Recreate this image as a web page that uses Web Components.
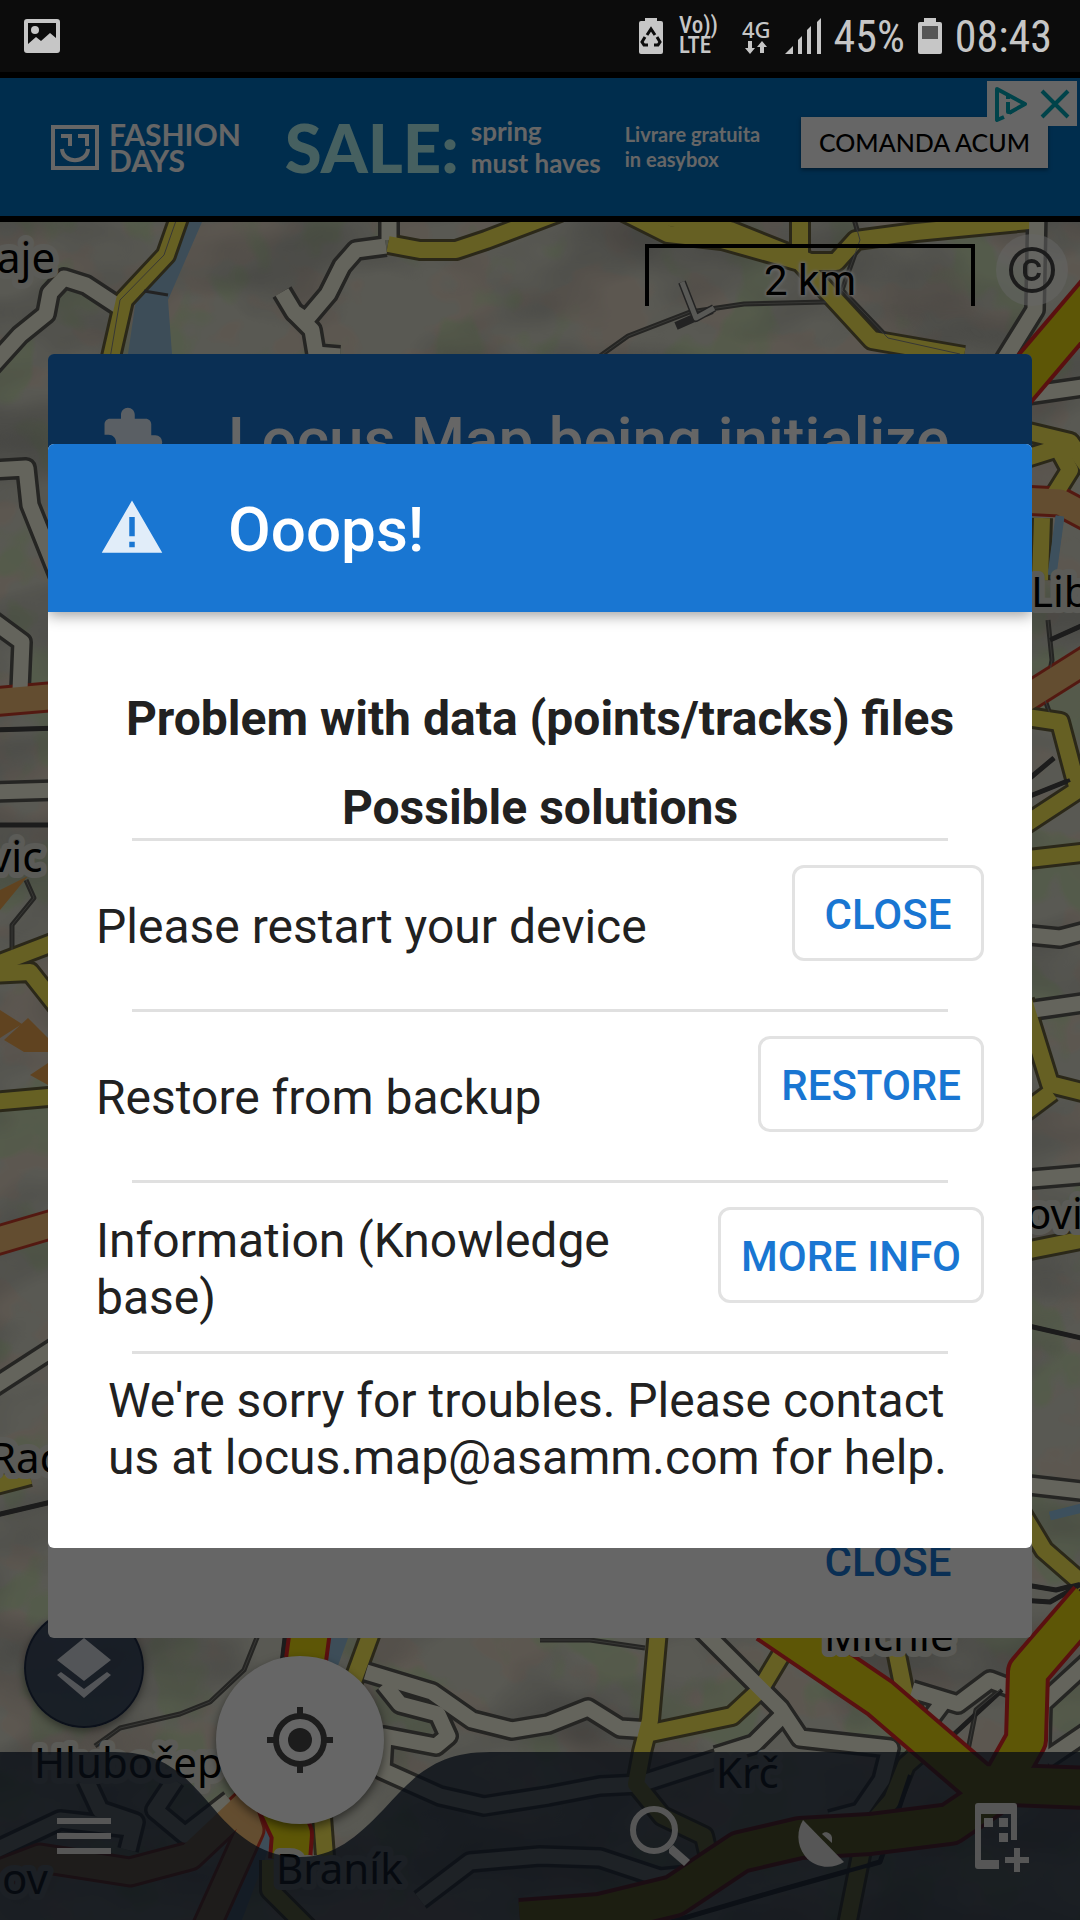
<!DOCTYPE html>
<html lang="en">
<head>
    <meta charset="UTF-8">
    <meta name="viewport" content="width=device-width, initial-scale=1">
    <title>Locus Map</title>
    <style>
        body {
            margin: 0;
            background: #000;
            font-family: Roboto, "Noto Sans", sans-serif;
        }
    </style>
</head>
<body>
<app-screen>
    <status-bar slot="status"></status-bar>
    <ad-banner slot="app"></ad-banner>
    <map-view slot="app"></map-view>
    <app-dialog slot="back" class="init">
        <svg slot="icon" viewBox="0 0 24 24"><path d="M20.5 11H19V7c0-1.1-.9-2-2-2h-4V3.5C13 2.12 11.88 1 10.5 1S8 2.12 8 3.5V5H4c-1.1 0-1.99.9-1.99 2v3.8H3.5c1.49 0 2.7 1.21 2.7 2.7s-1.21 2.7-2.7 2.7H2V20c0 1.1.9 2 2 2h3.8v-1.5c0-1.49 1.21-2.7 2.7-2.7s2.7 1.21 2.7 2.7V22H17c1.1 0 2-.9 2-2v-4h1.5a2.5 2.5 0 0 0 0-5z"/></svg>
        <span slot="title">Locus Map being initialize</span>
        <init-body></init-body>
    </app-dialog>
    <app-dialog slot="front">
        <svg slot="icon" viewBox="0 0 24 24"><path d="M1 21h22L12 2 1 21zm12-2h-2v-2h2v2zm0-4h-2V8h2v7z"/></svg>
        <span slot="title">Ooops!</span>
        <problem-body></problem-body>
    </app-dialog>
</app-screen>
</body>
<script>
    // small base: every element just puts its markup in an open shadow root
    class Base extends HTMLElement {
      constructor() {
        super()
        this.attachShadow({mode: 'open'})
        this.shadowRoot.innerHTML = this.render()
      }
    }

    class AppScreen extends Base {
      render() {
        return `
        <style>
          :host { display: grid; grid-template-rows: auto 1fr; min-height: 100vh; }
          .stage { display: grid; grid-template-columns: minmax(0, 1fr); }
          .stage > * { grid-area: 1 / 1; }
          .app { display: flex; flex-direction: column; isolation: isolate; }
          .layer { display: grid; align-items: center; padding: 0 48px; z-index: 1; }
          .scrim { background: rgba(0, 0, 0, .6); z-index: 2; }
          .front { z-index: 3; }
        </style>
        <slot name="status"></slot>
        <div class="stage">
          <div class="app"><slot name="app"></slot></div>
          <div class="layer"><slot name="back"></slot></div>
          <div class="scrim"></div>
          <div class="layer front"><slot name="front"></slot></div>
        </div>`
      }
    }
    customElements.define('app-screen', AppScreen)

    class StatusBar extends Base {
      render() {
        return `
        <style>
          :host { display: flex; align-items: center; height: 72px; padding: 0 28px 0 24px; background: #0c0c0c; color: #c6c6c6; fill: #c6c6c6; box-sizing: border-box; font: 44px "Roboto Condensed", Roboto, sans-serif; }
          svg { display: block; flex: none; }
          .right { display: flex; align-items: center; margin-left: auto; }
          .net { display: grid; line-height: 20px; font-weight: 500; }
          .volte { margin: 0 24px 0 16px; font-size: 23px; }
          .g { justify-items: center; gap: 2px; margin-right: 14px; font-size: 22px; font-family: "Noto Sans", sans-serif; }
          .pct { margin: 2px 13px 0; }
          .time { margin: 2px 0 0 13px; }
        </style>
        <svg width="36" height="34" viewBox="0 0 36 34"><path fill-rule="evenodd" d="M3 0h30q3 0 3 3v28q0 3-3 3H3q-3 0-3-3V3q0-3 3-3zM4 4v21l8-7 5 4 9-8 6 5V4z"/><circle cx="11" cy="11" r="4"/></svg>
        <div class="right">
          <svg width="24" height="36" viewBox="0 0 24 36"><path d="M6 3V0h12v3h4q2 0 2 2v29q0 2-2 2H2q-2 0-2-2V5q0-2 2-2z"/><path fill="none" stroke="#0c0c0c" stroke-width="3" d="M8 17l4-6 4 6M18 19l3 5-2 3h-4M6 19l-3 5 2 3h4"/></svg>
          <div class="net volte"><span>Vo))</span><span>LTE</span></div>
          <div class="net g"><span>4G</span><svg width="24" height="13" viewBox="0 0 24 13"><path d="M4 0h4v7h3l-5 6-5-6h3zM16 12h4V6h3l-5-6-5 6h3z"/></svg></div>
          <svg width="36" height="36" viewBox="0 0 36 36"><path d="M0 36l8-8v8zM13 36V22l4-4v18zM22 36V12l4-4v28zM32 36V4l4-4v36z"/></svg>
          <span class="pct">45%</span>
          <svg width="24" height="36" viewBox="0 0 24 36"><path d="M6 4V0h12v4h4q2 0 2 2v28q0 2-2 2H2q-2 0-2-2V6q0-2 2-2z"/><path fill="#555" d="M4 8h16v13H4z"/></svg>
          <span class="time">08:43</span>
        </div>`
      }
    }
    customElements.define('status-bar', StatusBar)

    class AdBanner extends Base {
      render() {
        return `
        <style>
          :host { position: relative; display: flex; align-items: center; height: 138px; padding: 0 32px 0 51px; border: solid #000; border-width: 6px 0; background: #0070c0; color: #fff; font: 700 26px/26px Lato, sans-serif; }
          .logo { display: flex; align-items: center; gap: 10px; margin-right: 44px; font-size: 30px; }
          .sale { color: #b0f0f0; font: 900 67px/67px Lato, sans-serif; margin-right: 12px; }
          .must { line-height: 32px; margin-right: 24px; }
          .free { font-size: 20px; line-height: 25px; }
          .cta { align-self: flex-start; margin: 39px 0 0 auto; border: 0; height: 51px; padding: 0 18px; background: #fff; color: #000; font: 500 25px/27px Lato, sans-serif; box-shadow: 0 2px 4px rgba(0, 0, 0, .4); }
          .choices { position: absolute; top: 3px; right: 3px; display: flex; width: 90px; height: 45px; background: #fff; }
          .choices button { flex: 1; display: grid; place-items: center; border: 0; padding: 0; background: none; }
          .choices svg { width: 36px; height: 36px; fill: none; stroke: #00a8b8; stroke-width: 4; }
        </style>
        <div class="logo">
          <svg width="48" height="45" viewBox="0 0 48 45" fill="none" stroke="#fff" stroke-width="4"><path d="M2 2h44v41H2zM10 11h9v10M27 11h9v10M11 24c1 15 25 15 26 0"/></svg>
          <span>FASHION<br>DAYS</span>
        </div>
        <span class="sale">SALE:</span>
        <span class="must">spring<br>must haves</span>
        <span class="free">Livrare gratuita<br>in easybox</span>
        <button class="cta">COMANDA ACUM</button>
        <div class="choices">
          <button aria-label="AdChoices"><svg viewBox="0 0 36 36"><path stroke-linejoin="round" d="M12 31l-7 3V3l28 15-16 9M16 16v10h4M16 10v3"/></svg></button>
          <button aria-label="Close ad"><svg viewBox="0 0 36 36"><path d="M5 5l26 26M31 5L5 31"/></svg></button>
        </div>`
      }
    }
    customElements.define('ad-banner', AdBanner)

    // kind: [casing colour, casing width, fill colour, fill width]
    const KINDS = {
      white: ['#5c5c58', 22, '#fbfae6', 15],
      yellow: ['#6b6540', 22, '#fff058', 16],
      thin: ['#5c5c58', 5, '#8a8a84', 1],
      black: ['#484848', 5, '#484848', 4],
      orange: ['#d0402c', 31, '#f8c078', 25],
      main: ['#e02828', 44, '#e8d810', 36],
      water: ['#98c8e8', 9, '#98c8e8', 8],
    }
    const ROADS = [
      // top band
      ['white', '-8,366 20,335 46,314 50,293 64,278 86,285 118,306'],
      ['yellow', '180,215 166,255 124,300 108,370'],
      ['thin', '178,215 164,255 120,300 108,370'],
      ['white', '389,210 389,240'],
      ['white', '386,246 356,250 342,266 328,294 306,320 294,312 282,292'],
      ['white', '294,312 312,330 316,354 340,356'],
      ['yellow', '388,244 420,250 456,250 486,240 560,212'],
      ['yellow', '620,210 668,234 722,240 800,262 838,303 872,340 964,356'],
      ['yellow', '800,210 800,262 836,262 856,240 916,232 1040,220'],
      ['yellow', '660,216 730,230 810,262'],
      ['thin', '852,212 860,240 842,290 888,338 960,354'],
      ['thin', '600,356 628,336 690,312 744,304 826,302'],
      ['white', '1037,210 1035,310 1004,360'],
      ['main', '1100,290 1015,390'],
      // left strip
      ['white', '-8,470 26,468 30,505 60,580'],
      ['white', '-8,620 22,642 20,690'],
      ['orange', '-8,702 60,696'],
      ['white', '-8,792 60,790'],
      ['black', '-8,730 60,728'],
      ['black', '-8,825 60,825'],
      ['thin', '12,955 12,925 34,898 26,880'],
      ['yellow', '-8,966 60,940'],
      ['yellow', '-8,974 30,972 60,1010'],
      ['yellow', '-8,1102 60,1096'],
      ['orange', '-8,1242 60,1222'],
      ['white', '-8,1388 60,1344'],
      ['yellow', '-8,1486 30,1476'],
      ['black', '-8,1516 60,1500'],
      // right strip
      ['white', '1020,396 1090,386'],
      ['yellow', '1020,430 1070,442 1090,470'],
      ['yellow', '1020,460 1058,448 1070,470 1050,502'],
      ['orange', '1020,500 1060,502 1090,518'],
      ['yellow', '1042,518 1040,580'],
      ['water', '1060,516 1052,575'],
      ['thin', '1048,620 1052,660 1045,700 1070,770'],
      ['black', '1050,640 1090,622'],
      ['orange', '1020,702 1090,658'],
      ['yellow', '1020,716 1060,722 1078,790 1020,828'],
      ['black', '1030,778 1054,758'],
      ['black', '1030,796 1070,780'],
      ['yellow', '1020,860 1090,852'],
      ['white', '1020,934 1060,938 1090,930'],
      ['white', '1020,1012 1090,1002'],
      ['yellow', '1024,1000 1050,1084 1090,1094'],
      ['yellow', '1020,1116 1052,1092'],
      ['white', '1020,1180 1090,1174'],
      ['yellow', '1020,1252 1090,1238'],
      ['black', '1020,1324 1090,1340'],
      ['white', '1020,1484 1090,1492'],
      ['water', '1050,1516 1090,1506'],
      ['yellow', '1020,1510 1044,1550 1090,1590'],
      ['black', '1020,1584 1056,1590 1080,1584'],
      ['black', '1020,1600 1050,1602 1082,1584'],
      // bottom, west of the button
      ['thin', '260,1630 244,1670 210,1702 180,1714 120,1728 95,1746'],
      ['white', '86,1780 100,1810 135,1822 128,1850'],
      ['white', '175,1780 155,1810 185,1835 230,1800'],
      ['white', '-8,1852 60,1820 130,1828'],
      ['orange', '-8,1876 40,1858 130,1872 190,1856 260,1790'],
      ['orange', '240,1800 250,1830 205,1930'],
      ['yellow', '270,1860 270,1890 310,1930'],
      ['main', '276,1800 292,1834 290,1860'],
      ['main', '310,1630 306,1660'],
      ['black', '286,1630 280,1680'],
      ['yellow', '320,1790 326,1870'],
      ['yellow', '372,1630 350,1690'],
      ['white', '366,1672 432,1692 472,1720 512,1730 548,1724 588,1708 620,1728 650,1730'],
      ['white', '384,1684 400,1704 438,1714 448,1736 436,1746 384,1736 382,1770 440,1796 484,1806 548,1796 600,1786 640,1784 720,1758'],
      ['white', '420,1900 470,1862 540,1856 600,1858 660,1878 700,1874'],
      // bottom, east
      ['thin', '540,1640 590,1640 645,1648'],
      ['yellow', '658,1630 650,1720 642,1752 636,1784 662,1816 704,1836 712,1870'],
      ['yellow', '646,1734 732,1716 760,1690 790,1640'],
      ['white', '700,1628 780,1708 800,1738 890,1748 882,1780 860,1812 830,1820'],
      ['white', '780,1718 754,1744 716,1756'],
      ['yellow', '894,1640 904,1690 924,1730'],
      ['white', '912,1690 958,1704 990,1680 1016,1690'],
      ['white', '928,1722 946,1698'],
      ['black', '1002,1690 950,1738'],
      ['thin', '1000,1690 976,1710 968,1750'],
      ['white', '1040,1780 1042,1704 1090,1660'],
      ['white', '1046,1760 1090,1730'],
      ['yellow', '930,1744 906,1765 892,1800 866,1830 846,1930'],
      ['main', '768,1622 880,1698 980,1784 1090,1788'],
      ['main', '1090,1600 1028,1672 1026,1740 1000,1786'],
      ['main', '1000,1790 950,1824 870,1834 800,1838 740,1852 674,1896 600,1914 520,1920'],
      ['black', '1090,1580 1010,1672'],
      ['black', '910,1775 895,1820 880,1862 780,1890 660,1925'],
    ]
    const LABELS = [
      [-3, 273, 'aje'], [-10, 872, 'vic'], [-10, 1473, 'Rac'], [1031, 607, 'Lib'], [1026, 1229, 'ovi'],
      [34, 1778, 'Hlubočep'], [2, 1894, 'ov'], [276, 1884, 'Braník'], [716, 1788, 'Krč'], [824, 1651, 'Michle'],
    ]

    class MapView extends Base {
      render() {
        const line = (pts, colour, w) => `<polyline points="${pts}" stroke="${colour}" stroke-width="${w}"/>`
        const road = (k, casing) => line(k[1], KINDS[k[0]][casing ? 0 : 2], KINDS[k[0]][casing ? 1 : 3])
        const low = ROADS.filter(r => r[0] !== 'main')
        const high = ROADS.filter(r => r[0] === 'main')
        return `
        <style>
          :host { flex: 1; display: grid; grid-template-columns: minmax(0, 1fr); grid-template-rows: auto 1fr auto; overflow: hidden; }
          button { display: grid; place-items: center; border: 0; padding: 0; background: none; }
          .canvas { grid-area: 1 / 1 / 4 / 2; position: relative; min-height: 400px; }
          .canvas svg { position: absolute; inset: 0; width: 100%; height: 100%; }
          .canvas text { font: 42px "Noto Sans", sans-serif; fill: #000; stroke: #e4e4da; stroke-width: 12; stroke-linejoin: round; paint-order: stroke; }
          .top { grid-area: 1 / 1; z-index: 1; display: flex; justify-content: flex-end; align-items: flex-start; gap: 21px; padding: 12px 12px 0 0; }
          .scale { width: 322px; height: 50px; margin-top: 10px; padding-top: 8px; border: 4px solid #000; border-bottom: 0; display: grid; place-items: center; color: #000; font-size: 42px; line-height: 48px; text-shadow: 0 0 3px #fff, 0 0 3px #fff, 0 0 4px #fff, 0 0 4px #fff; }
          .copy { width: 72px; height: 72px; border-radius: 50%; background: rgba(255, 255, 255, .5); }
          .nav { grid-area: 3 / 1; z-index: 1; display: flex; position: relative; height: 168px; }
          .bar { position: absolute; inset: 0; background: rgba(20, 33, 52, .76); clip-path: path("M0 0H115C165 0 186 24 214 57C240 88 266 105 300 105C334 105 356 86 384 57C414 24 436 0 490 0H9000V168H0Z"); }
          .nav button { position: relative; width: 168px; }
          .nav button:first-of-type { margin-right: auto; }
          .nav svg { width: 72px; height: 72px; fill: #d8d8d8; }
          .float { grid-area: 3 / 1; z-index: 2; justify-self: start; align-self: start; display: flex; align-items: flex-start; gap: 72px; margin: -144px 0 0 24px; }
          .layers { width: 120px; height: 120px; border-radius: 50%; border: 2px solid rgba(20, 34, 60, .8); background: rgba(44, 60, 84, .88); box-shadow: 0 3px 8px rgba(0, 0, 0, .4); }
          .gps { width: 168px; height: 168px; margin-top: 48px; border-radius: 50%; background: #fff; box-shadow: 0 4px 10px rgba(0, 0, 0, .5); }
        </style>
        <div class="canvas">
          <svg viewBox="0 222 1080 1698" preserveAspectRatio="xMidYMid slice">
            <defs>
              <filter id="relief" x="0" y="0" width="1" height="1"><feTurbulence type="fractalNoise" baseFrequency=".006 .01" numOctaves="3" seed="8"/><feColorMatrix values="0 0 0 0 .25  0 0 0 0 .25  0 0 0 0 .24  2.4 0 0 0 -1"/></filter>
              <filter id="wood" x="0" y="0" width="1" height="1"><feTurbulence type="fractalNoise" baseFrequency=".014 .012" numOctaves="3" seed="21"/><feColorMatrix values="0 0 0 0 .64  0 0 0 0 .78  0 0 0 0 .48  0 12 0 0 -6.6"/></filter>
              <filter id="town" x="0" y="0" width="1" height="1"><feTurbulence type="fractalNoise" baseFrequency=".014 .018" numOctaves="3" seed="5"/><feColorMatrix values="0 0 0 0 .82  0 0 0 0 .7  0 0 0 0 .58  0 0 14 0 -7"/></filter>
            </defs>
            <rect y="222" width="1080" height="1698" fill="#dedecf"/>
            <rect y="222" width="1080" height="1698" filter="url(#town)" opacity=".8"/>
            <rect y="222" width="1080" height="1698" filter="url(#wood)" opacity=".8"/>
            <rect y="222" width="1080" height="1698" filter="url(#relief)" opacity=".55"/>
            <path fill="#98c0dc" d="M186 222h16l-34 78 4 54h-44l8-55 20-25zM324 1638h24l-18 50h-20zM258 1810l14 30-30 80h-34z"/>
            <path fill="#f0a850" d="M0 890l28-14-28 34zM0 1010l22 14-22 14zM4 1040l24-22 20 20v14H24zM30 1075l18-12v22z"/>
            <g fill="none" stroke-linejoin="round">
              ${low.map(r => road(r, true)).join('')}${low.map(r => road(r)).join('')}
              ${high.map(r => road(r, true)).join('')}${high.map(r => road(r)).join('')}
              <path stroke="#585858" stroke-width="3" d="M144 291l24 4"/>
              <path stroke="#585858" stroke-width="8" d="M682 282l14 36 18-10M676 326l36-16"/><path stroke="#dcdcd4" stroke-width="5" d="M682 282l14 36 18-10"/>
            </g>
            ${LABELS.map(l => `<text x="${l[0]}" y="${l[1]}">${l[2]}</text>`).join('')}
          </svg>
        </div>
        <div class="top">
          <div class="scale">2 km</div>
          <button class="copy" aria-label="Map copyright"><svg width="48" height="48" viewBox="0 0 48 48" fill="none" stroke="#484848"><circle cx="24" cy="24" r="21" stroke-width="4"/><path stroke-width="4" d="M31 21c-1-8-14-8-14 0v6c0 8 13 8 14 0"/></svg></button>
        </div>
        <div class="float">
          <button class="layers" aria-label="Map layers"><svg width="54" height="60" viewBox="0 0 54 60" fill="#d0d4dc"><path d="M27 0l27 22-27 21L0 22zM0 37l4-3 23 17 23-17 4 3-27 23z"/></svg></button>
          <button class="gps" aria-label="My position"><svg width="66" height="66" viewBox="0 0 66 66" fill="none" stroke="#464646" stroke-width="6"><circle cx="33" cy="33" r="24"/><circle cx="33" cy="33" r="12" fill="#464646" stroke="none"/><path d="M33 0v9M33 57v9M0 33h9M57 33h9"/></svg></button>
        </div>
        <nav class="nav">
          <div class="bar"></div>
          <button aria-label="Menu"><svg viewBox="0 0 72 72"><path d="M9 18h54v6H9zM9 33h54v6H9zM9 48h54v6H9z"/></svg></button>
          <button aria-label="Search"><svg viewBox="0 0 72 72"><circle cx="30" cy="30" r="21" fill="none" stroke="#d8d8d8" stroke-width="6"/><path d="M45 49l4-4 17 15-6 6-15-13z"/></svg></button>
          <button aria-label="GPS"><svg viewBox="0 0 72 72"><path d="M11 20l41 42C40 70 22 68 13 56 4 44 5 30 11 20z"/><path d="M30 34c3-4 10-1 10 4v5z"/></svg></button>
          <button aria-label="Add panel"><svg viewBox="0 0 72 72"><path d="M18 3h36q3 0 3 3v34h-6V14H21v46h18v9H18q-3 0-3-3V6q0-3 3-3zM24 18h9v9h-9zM39 18h9v9h-9zM39 33h9v9h-9zM54 48h6v9h9v6h-9v9h-6v-9h-9v-6h9z"/></svg></button>
        </nav>`
      }
    }
    customElements.define('map-view', MapView)

    class AppDialog extends Base {
      render() {
        return `
        <style>
          :host { display: block; border-radius: 6px; overflow: hidden; background: #fff; color: #212121; }
          header { position: relative; display: flex; align-items: center; gap: 60px; height: 168px; padding: 0 48px; background: #1976d2; color: #fff; font-size: 62px; font-weight: 500; line-height: 72px; white-space: nowrap; box-shadow: 0 3px 14px rgba(0, 0, 0, .4); }
          ::slotted(svg) { flex: none; width: 66px; height: 66px; margin: 0 3px; fill: rgba(255, 255, 255, .87); }
          ::slotted(span) { padding-top: 4px; }
        </style>
        <header><slot name="icon"></slot><slot name="title"></slot></header>
        <slot></slot>`
      }
    }
    customElements.define('app-dialog', AppDialog)

    class FlatButton extends Base {
      render() {
        return `
        <style>
          :host { display: flex; }
          button { min-width: 192px; height: 96px; padding: 4px 20px 0; border: 3px solid #e2e2e2; border-radius: 12px; background: #fff; color: #1976d2; font: 500 42px/48px Roboto, sans-serif; }
          :host([plain]) button { border-color: transparent; }
        </style>
        <button><slot></slot></button>`
      }
    }
    customElements.define('flat-button', FlatButton)

    class SolutionRow extends Base {
      render() {
        return `
        <style>
          :host { display: flex; align-items: center; gap: 48px; height: 168px; padding: 0 48px; line-height: 57px; }
          .text { flex: 1; padding-top: 3px; }
          ::slotted(flat-button) { align-self: flex-start; margin-top: 24px; }
        </style>
        <div class="text"><slot></slot></div>
        <slot name="action"></slot>`
      }
    }
    customElements.define('solution-row', SolutionRow)

    class ProblemBody extends Base {
      render() {
        return `
        <style>
          :host { display: block; padding: 78px 0 62px; font-size: 48px; line-height: 57px; }
          h2 { margin: 0 0 32px; font-size: inherit; line-height: inherit; font-weight: 700; text-align: center; }
          h2 + h2 { margin-bottom: 2px; }
          hr { height: 3px; margin: 0 84px; border: 0; background: #e0e0e0; }
          p { margin: 18px 60px 0; }
        </style>
        <h2>Problem with data (points/tracks) files</h2>
        <h2>Possible solutions</h2>
        <hr>
        <solution-row>Please restart your device<flat-button slot="action">CLOSE</flat-button></solution-row>
        <hr>
        <solution-row>Restore from backup<flat-button slot="action">RESTORE</flat-button></solution-row>
        <hr>
        <solution-row>Information (Knowledge base)<flat-button slot="action">MORE INFO</flat-button></solution-row>
        <hr>
        <p>We're sorry for troubles. Please contact us at locus.map@asamm.com for help.</p>`
      }
    }
    customElements.define('problem-body', ProblemBody)

    class InitBody extends Base {
      render() {
        return `
        <style>
          :host { display: flex; justify-content: flex-end; align-items: flex-end; min-height: 1116px; padding: 0 48px 30px; box-sizing: border-box; }
        </style>
        <flat-button plain>CLOSE</flat-button>`
      }
    }
    customElements.define('init-body', InitBody)
</script>
</html>
